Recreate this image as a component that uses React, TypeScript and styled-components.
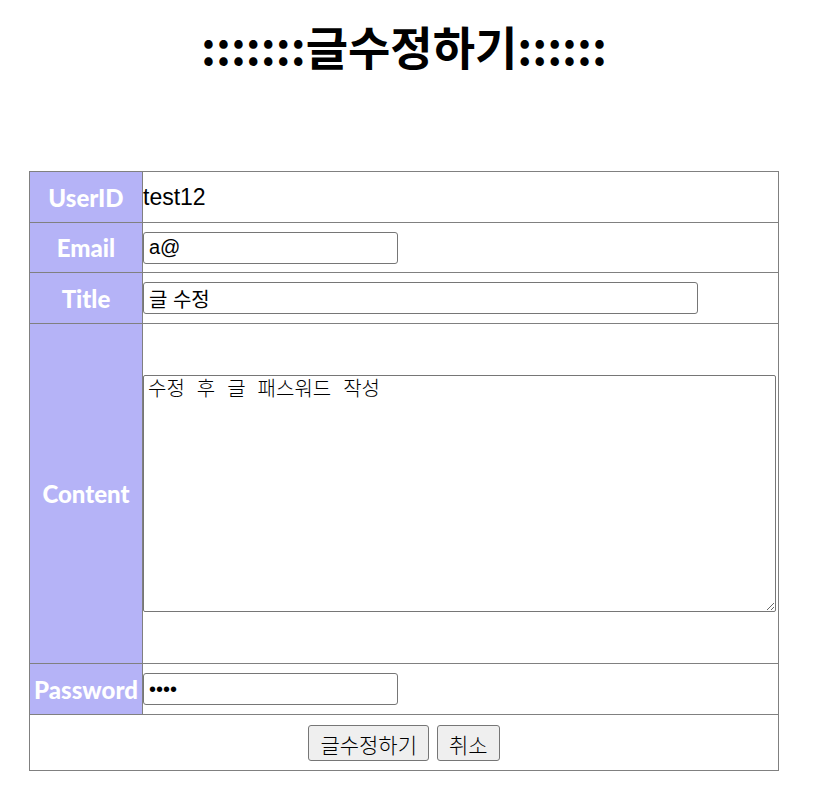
import React from "react";
import styled, { createGlobalStyle } from "styled-components";

const GlobalStyle = createGlobalStyle`
  body {
    margin: 0;
    background: #fff;
    font-family: "Liberation Sans", "Noto Sans CJK KR", sans-serif;
  }
`;

const Page = styled.div`
  width: 808px;
  display: flex;
  flex-direction: column;
  align-items: center;
`;

const Heading = styled.h1`
  margin: 12px 0 0;
  height: 159px;
  font-family: "Noto Sans CJK KR", sans-serif;
  font-size: 46px;
  font-weight: 700;
  line-height: 66px;
  color: #000;
`;

const Table = styled.table`
  width: 750px;
  border-collapse: collapse;
  border: 1px solid #808080;
`;

const Row = styled.tr<{ height?: number }>`
  height: ${(props) => props.height || 50}px;
`;

const Label = styled.th`
  width: 112px;
  padding: 0;
  background: #b5b3f7;
  color: #fff;
  font-family: Lato, "Noto Sans", sans-serif;
  font-size: 24px;
  font-weight: 900;
  text-align: center;
  border: 1px solid #808080;
  white-space: nowrap;
`;

const Cell = styled.td<{ center?: boolean }>`
  padding: 0;
  border: 1px solid #808080;
  font-size: 23px;
  text-align: ${(props) => (props.center ? "center" : "left")};
  vertical-align: middle;
`;

const Field = styled.input<{ wide?: boolean }>`
  box-sizing: border-box;
  display: block;
  width: ${(props) => (props.wide ? 555 : 255)}px;
  height: 32px;
  padding: 1px 5px;
  border: 1px solid #767676;
  border-radius: 3px;
  font-family: "Liberation Sans", "Noto Sans CJK KR", sans-serif;
  font-size: 20px;
  color: #000;
  outline: none;
`;

const Content = styled.textarea`
  box-sizing: border-box;
  display: block;
  width: 633px;
  height: 237px;
  padding: 2px 4px;
  border: 1px solid #767676;
  border-radius: 2px;
  font-family: "Liberation Mono", "Noto Sans CJK KR", monospace;
  font-size: 20px;
  font-weight: 300;
  line-height: 26px;
  color: #000;
  resize: both;
  outline: none;
`;

const Buttons = styled.div`
  display: flex;
  justify-content: center;
  gap: 8px;
`;

const Button = styled.button`
  height: 36px;
  padding: 2px 11px 0;
  border: 1px solid #767676;
  border-radius: 3px;
  background: #efefef;
  font-family: "Noto Sans CJK KR", sans-serif;
  font-size: 21px;
  font-weight: 300;
  color: #000;
`;

export default function App() {
  return (
    <Page>
      <GlobalStyle />
      <Heading>:::::::글수정하기::::::</Heading>
      <Table>
        <tbody>
          <Row height={51}>
            <Label>UserID</Label>
            <Cell>test12</Cell>
          </Row>
          <Row>
            <Label>Email</Label>
            <Cell>
              <Field type="text" defaultValue="a@" />
            </Cell>
          </Row>
          <Row height={51}>
            <Label>Title</Label>
            <Cell>
              <Field type="text" wide defaultValue="글 수정" />
            </Cell>
          </Row>
          <Row height={340}>
            <Label>Content</Label>
            <Cell>
              <Content defaultValue="수정 후 글 패스워드 작성" />
            </Cell>
          </Row>
          <Row height={51}>
            <Label>Password</Label>
            <Cell>
              <Field type="password" defaultValue="1234" />
            </Cell>
          </Row>
          <Row height={56}>
            <Cell colSpan={2} center>
              <Buttons>
                <Button>글수정하기</Button>
                <Button>취소</Button>
              </Buttons>
            </Cell>
          </Row>
        </tbody>
      </Table>
    </Page>
  );
}
